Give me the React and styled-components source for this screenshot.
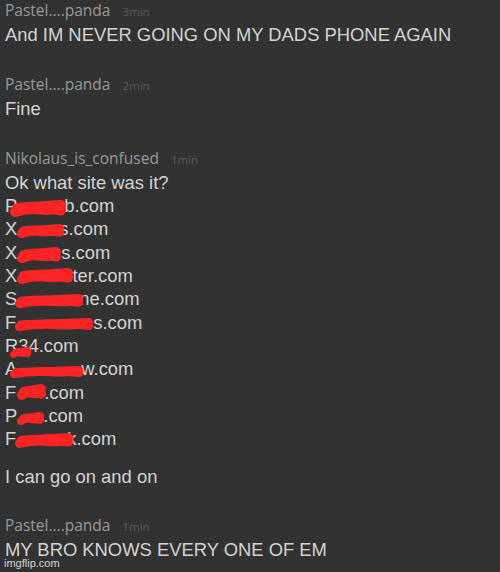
import React from 'react';
import styled, { createGlobalStyle } from 'styled-components';

const GlobalStyle = createGlobalStyle`
  html, body {
    margin: 0;
    padding: 0;
    background: #323232;
  }
`;

const sites = [
  { pre: 'P', gap: 47, post: 'b.com', s: { x: 5, y: 6, w: 56, h: 17 } },
  { pre: 'X', gap: 42, post: 's.com', s: { x: 12, y: 7, w: 47, h: 14 } },
  { pre: 'X', gap: 44, post: 's.com', s: { x: 12, y: 6, w: 44, h: 16 } },
  { pre: 'X', gap: 46, post: 'ster.com', s: { x: 12, y: 4, w: 56, h: 16 } },
  { pre: 'S', gap: 62, post: 'ne.com', s: { x: 10, y: 7, w: 68, h: 14 } },
  { pre: 'F', gap: 77, post: 's.com', s: { x: 10, y: 7, w: 78, h: 13 } },
  { pre: 'R34.com', gap: 0, post: '', s: { x: 5, y: 13, w: 21, h: 11 } },
  { pre: 'A', gap: 64, post: 'w.com', s: { x: 5, y: 9, w: 73, h: 12 } },
  { pre: 'F', gap: 28, post: '.com', s: { x: 12, y: 3, w: 29, h: 16 } },
  { pre: 'P', gap: 26, post: '.com', s: { x: 12, y: 8, w: 27, h: 13 } },
  { pre: 'F', gap: 51, post: 'k.com', s: { x: 10, y: 6, w: 58, h: 15 } },
];

// marker scribble drawn back and forth over the hidden letters
const Scribble = ({ x, y, w, h }) => {
  const sw = Math.max(7, h * 0.62);
  const p = sw / 2;
  const d = [
    `M${p} ${h - p}`,
    `Q${w * 0.3} ${h * 0.45} ${w * 0.55} ${h * 0.55}`,
    `T${w - p} ${p}`,
    `L${p + 2} ${h * 0.5}`,
    `Q${w * 0.5} ${h * 0.3} ${w - p} ${h * 0.6}`,
  ].join(' ');
  return (
    <ScribbleSvg
      style={{ left: x, top: y }}
      width={w}
      height={h}
      viewBox={`0 0 ${w} ${h}`}
    >
      <path
        d={d}
        fill="none"
        stroke="#fb2424"
        strokeWidth={sw}
        strokeLinecap="round"
        strokeLinejoin="round"
      />
    </ScribbleSvg>
  );
};

const Comment = ({ user, time, children }) => (
  <CommentBlock>
    <Header>
      <UserName>{user}</UserName>
      <TimeAgo>{time}</TimeAgo>
    </Header>
    <Body>{children}</Body>
  </CommentBlock>
);

const App = () => {
  return (
    <Page>
      <GlobalStyle />
      <Thread>
        <Comment user="Pastel....panda" time="3min">
          <Line>And IM NEVER GOING ON MY DADS PHONE AGAIN</Line>
        </Comment>
        <Comment user="Pastel....panda" time="2min">
          <Line>Fine</Line>
        </Comment>
        <Comment user="Nikolaus_is_confused" time="1min">
          <Line>Ok what site was it?</Line>
          {sites.map((site, i) => (
            <Line key={i}>
              {site.pre}
              {site.gap > 0 && <Hidden $w={site.gap} />}
              {site.post}
              <Scribble {...site.s} />
            </Line>
          ))}
          <Line $spaced>I can go on and on</Line>
        </Comment>
        <Comment user="Pastel....panda" time="1min">
          <Line>MY BRO KNOWS EVERY ONE OF EM</Line>
        </Comment>
      </Thread>
      <Watermark>imgflip.com</Watermark>
    </Page>
  );
};

const Page = styled.div`
  position: relative;
  width: 500px;
  height: 572px;
  overflow: hidden;
  background: #323232;
`;

const Thread = styled.div`
  display: flex;
  flex-direction: column;
  gap: 27.5px;
  padding: 0 0 0 5px;
`;

const CommentBlock = styled.div`
  display: flex;
  flex-direction: column;
  gap: 3px;
`;

const Header = styled.div`
  display: flex;
  align-items: baseline;
  gap: 12px;
  height: 20px;
  line-height: 20px;
`;

const UserName = styled.span`
  font-family: 'Open Sans', sans-serif;
  font-size: 15.5px;
  color: #999999;
`;

const TimeAgo = styled.span`
  font-family: 'Open Sans', sans-serif;
  font-size: 11.5px;
  color: #5c5c5c;
`;

const Body = styled.div`
  display: flex;
  flex-direction: column;
`;

const Line = styled.div`
  position: relative;
  display: flex;
  font-family: 'Liberation Sans', Arial, sans-serif;
  font-size: 18.4px;
  line-height: 23.33px;
  color: #d4d4d4;
  white-space: pre;
  margin-top: ${(p) => (p.$spaced ? '14px' : '0')};
`;

const Hidden = styled.span`
  display: inline-block;
  width: ${(p) => p.$w}px;
`;

const ScribbleSvg = styled.svg`
  position: absolute;
  display: block;
`;

const Watermark = styled.div`
  position: absolute;
  left: 4px;
  top: 556px;
  font-family: 'Liberation Sans', Arial, sans-serif;
  font-size: 11px;
  line-height: 14px;
  color: #d6d6d6;
`;

export default App;
